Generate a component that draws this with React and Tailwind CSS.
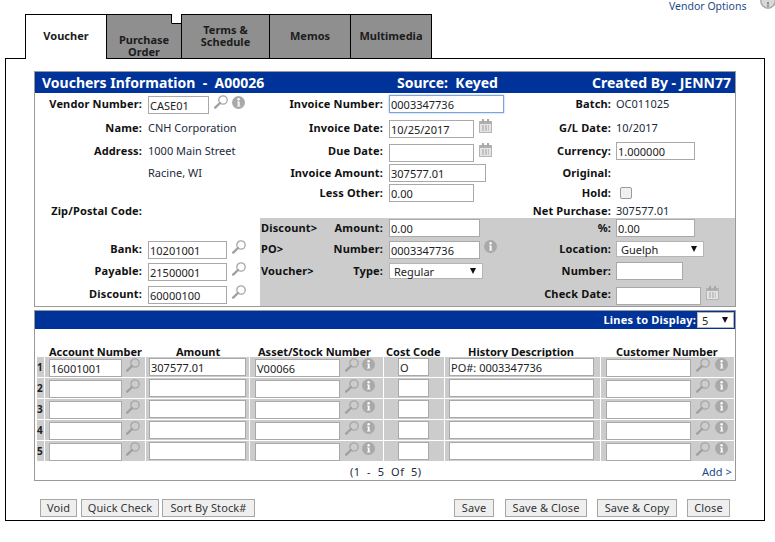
import { Fragment } from 'react'

function SearchIcon({ className = '' }) {
  return (
    <svg viewBox="0 0 14 14" className={`absolute h-[14px] w-[14px] ${className}`}>
      <circle cx="9" cy="5" r="4.2" fill="none" stroke="#a6a6a6" strokeWidth="1.3" />
      <path d="M6 8 L1.2 12.6" stroke="#a0a0a0" strokeWidth="2.4" strokeLinecap="round" />
    </svg>
  )
}

function InfoIcon({ className = '' }) {
  return (
    <svg viewBox="0 0 13 13" className={`absolute h-[13px] w-[13px] ${className}`}>
      <circle cx="6.5" cy="6.5" r="6.5" fill="#a9a9a9" />
      <circle cx="6.6" cy="3.3" r="1.2" fill="#fff" />
      <path d="M5 5.4 H7.6 V9.8 H8.4 V10.6 H5 V9.8 H5.8 V6.2 H5 Z" fill="#fff" />
    </svg>
  )
}

function CalendarIcon({ className = '' }) {
  return (
    <svg viewBox="0 0 13 14" className={`absolute h-[14px] w-[13px] ${className}`}>
      <rect x="0.5" y="2.5" width="12" height="11" fill="#e4e4e4" stroke="#b5b5b5" />
      <rect x="1" y="2" width="11" height="3" fill="#b0b0b0" />
      <rect x="3" y="0" width="2" height="4" fill="#a8a8a8" />
      <rect x="8" y="0" width="2" height="4" fill="#a8a8a8" />
      <path d="M3 7h7M3 9h7M3 11h7" stroke="#a0a0a0" strokeWidth="1" strokeDasharray="2 1" />
    </svg>
  )
}

function Label({ className = '', children }) {
  return (
    <span className={`absolute h-[14px] whitespace-nowrap text-right text-[11px] font-bold leading-[14px] tracking-[0.15px] text-[#111] ${className}`}>
      {children}
    </span>
  )
}

function Value({ className = '', children }) {
  return (
    <span className={`absolute h-[14px] whitespace-nowrap text-[11px] leading-[14px] text-[#222a3a] ${className}`}>
      {children}
    </span>
  )
}

function Field({ className = '', value = '' }) {
  return (
    <input
      readOnly
      value={value}
      className={`absolute h-[18px] border border-[#a9a9a9] bg-white pl-[1px] text-[11px] text-[#222] outline-none ${className}`}
    />
  )
}

function Select({ className = '', value, arrow = '' }) {
  return (
    <div className={`absolute h-[16px] border border-[#b5b5b5] bg-white pl-[4px] text-[11px] leading-[15px] text-[#222] ${className}`}>
      {value}
      <svg viewBox="0 0 6 6" className={`absolute top-[4px] h-[6px] w-[6px] ${arrow}`}>
        <polygon points="0,0 6,0 3,6" fill="#111" />
      </svg>
    </div>
  )
}

function Btn({ className = '', children }) {
  return (
    <button
      type="button"
      className={`absolute top-[499px] h-[18px] border border-[#a6a6a6] bg-[#efefef] p-0 text-center text-[11px] leading-[16px] tracking-[0.1px] text-[#333] ${className}`}
    >
      {children}
    </button>
  )
}

const tabClass =
  'absolute top-[14px] flex h-[45px] items-center justify-center border border-black bg-[#8f8f8f] text-center text-[11px] font-bold leading-[12px] text-[#1c1c1c]'

const headers = [
  ['Account Number', 'left-[49px]'],
  ['Amount', 'left-[176px]'],
  ['Asset/Stock Number', 'left-[258px]'],
  ['Cost Code', 'left-[386px]'],
  ['History Description', 'left-[468px]'],
  ['Customer Number', 'left-[616px]'],
]

const lines = [
  { account: '16001001', amount: '307577.01', stock: 'V00066', cost: 'O', history: 'PO#: 0003347736', customer: '' },
  { account: '', amount: '', stock: '', cost: '', history: '', customer: '' },
  { account: '', amount: '', stock: '', cost: '', history: '', customer: '' },
  { account: '', amount: '', stock: '', cost: '', history: '', customer: '' },
  { account: '', amount: '', stock: '', cost: '', history: '', customer: '' },
]

function LineRow({ line, index }) {
  return (
    <Fragment>
      <div className="bg-[#cccccc] pt-[3px] text-[10px] font-bold leading-[14px] text-[#222]">{index + 1}</div>
      <div className="relative bg-[#cccccc]">
        <Field className="left-[4px] top-[2px] w-[73px]" value={line.account} />
        <SearchIcon className="left-[81px] top-[1px]" />
      </div>
      <div className="relative bg-[#cccccc]">
        <Field className="left-[3px] top-[1px] w-[97px]" value={line.amount} />
      </div>
      <div className="relative bg-[#cccccc]">
        <Field className="left-[5px] top-[2px] w-[85px]" value={line.stock} />
        <SearchIcon className="left-[95px] top-[1px]" />
        <InfoIcon className="left-[112px] top-[1px]" />
      </div>
      <div className="relative bg-[#cccccc]">
        <Field className="left-[14px] top-[1px] w-[31px]" value={line.cost} />
      </div>
      <div className="relative bg-[#cccccc]">
        <Field className="left-[4px] top-[1px] w-[145px]" value={line.history} />
      </div>
      <div className="relative bg-[#cccccc]">
        <Field className="left-[5px] top-[2px] w-[85px]" value={line.customer} />
        <SearchIcon className="left-[95px] top-[1px]" />
        <InfoIcon className="left-[114px] top-[1px]" />
      </div>
    </Fragment>
  )
}

export default function App() {
  return (
    <div className="relative h-[542px] w-[775px] overflow-hidden bg-white font-['DejaVu_Sans',sans-serif]">
      <a className="absolute left-[669px] top-[0px] text-[10.5px] leading-[13px] text-[#1f4a8a]">Vendor Options</a>
      <svg viewBox="0 0 16 16" className="absolute left-[760px] top-[-7px] h-[16px] w-[16px]">
        <circle cx="8" cy="8" r="7.2" fill="#d8d8d8" stroke="#a9a9a9" strokeWidth="1.4" />
        <rect x="7" y="9" width="2" height="2.4" fill="#8a8a8a" />
        <circle cx="8" cy="13" r="1.1" fill="#8a8a8a" />
      </svg>

      {/* outer frame */}
      <div className="absolute left-[5px] top-[58px] h-[463px] w-[760px] border border-black" />

      {/* tabs */}
      <div className="absolute left-[25px] top-[14px] z-10 flex h-[45px] w-[82px] items-center justify-center border border-b-0 border-black bg-white pb-[1px] text-[11px] font-bold text-[#1c1c1c]">
        Voucher
      </div>
      <div className={`${tabClass} left-[106px] w-[76px] items-end`}>
        Purchase
        <br />
        Order
      </div>
      <svg viewBox="0 0 11 11" className="absolute left-[171px] top-[14px] h-[11px] w-[11px]">
        <polygon points="0,0 11,0 11,11" fill="#ffffff" />
        <polygon points="0,0 0,10 11,10" fill="#ffffff" />
        <path d="M0.5 0 V9.5 H11" fill="none" stroke="#000" />
      </svg>
      <div className={`${tabClass} left-[181px] w-[89px] pb-[2px]`}>
        Terms &amp;
        <br />
        Schedule
      </div>
      <div className={`${tabClass} left-[269px] w-[82px] pb-[2px]`}>Memos</div>
      <div className={`${tabClass} left-[350px] w-[82px] pb-[2px]`}>Multimedia</div>

      {/* voucher panel */}
      <div className="absolute left-[34px] top-[71px] h-[236px] w-[702px] border border-[#999]">
        <div className="absolute left-0 right-0 top-0 h-[21px] bg-[#003399]" />
        <div className="absolute bottom-0 left-[225px] right-0 h-[88px] bg-[#cccccc]" />
      </div>
      <span className="absolute left-[42px] top-[74px] whitespace-pre text-[14px] font-bold leading-[17px] text-white">Vouchers Information  -  A00026</span>
      <span className="absolute left-[397px] top-[74px] whitespace-pre text-[14px] font-bold leading-[17px] text-white">Source:  Keyed</span>
      <span className="absolute left-[592px] top-[74px] whitespace-pre text-[14px] font-bold leading-[17px] text-white">Created By - JENN77</span>

      {/* left column */}
      <Label className="right-[633px] top-[97px]">Vendor Number:</Label>
      <Field className="left-[148px] top-[96px] w-[61px]" value="CASE01" />
      <SearchIcon className="left-[214px] top-[95px]" />
      <InfoIcon className="left-[232px] top-[96px]" />
      <Label className="right-[633px] top-[121px]">Name:</Label>
      <Value className="left-[148px] top-[121px]">CNH Corporation</Value>
      <Label className="right-[633px] top-[144px]">Address:</Label>
      <Value className="left-[148px] top-[144px]">1000 Main Street</Value>
      <Value className="left-[148px] top-[166px]">Racine, WI</Value>
      <Label className="right-[633px] top-[204px]">Zip/Postal Code:</Label>
      <Label className="right-[633px] top-[242px]">Bank:</Label>
      <Field className="left-[148px] top-[241px] w-[79px]" value="10201001" />
      <SearchIcon className="left-[232px] top-[240px]" />
      <Label className="right-[633px] top-[264px]">Payable:</Label>
      <Field className="left-[148px] top-[263px] w-[79px]" value="21500001" />
      <SearchIcon className="left-[232px] top-[262px]" />
      <Label className="right-[633px] top-[287px]">Discount:</Label>
      <Field className="left-[148px] top-[286px] w-[79px]" value="60000100" />
      <SearchIcon className="left-[232px] top-[285px]" />

      {/* middle column */}
      <Label className="right-[392px] top-[97px]">Invoice Number:</Label>
      <input
        readOnly
        value="0003347736"
        className="absolute left-[389px] top-[95px] h-[18px] w-[115px] border border-[#7ea3d8] bg-white pl-[1px] text-[11px] text-[#222] shadow-[0_0_2px_#9dbbe6] outline-none"
      />
      <Label className="right-[392px] top-[121px]">Invoice Date:</Label>
      <Field className="left-[389px] top-[120px] w-[85px]" value="10/25/2017" />
      <CalendarIcon className="left-[479px] top-[119px]" />
      <Label className="right-[392px] top-[144px]">Due Date:</Label>
      <Field className="left-[389px] top-[144px] w-[85px]" />
      <CalendarIcon className="left-[479px] top-[143px]" />
      <Label className="right-[392px] top-[166px]">Invoice Amount:</Label>
      <Field className="left-[389px] top-[164px] w-[97px]" value="307577.01" />
      <Label className="right-[392px] top-[186px]">Less Other:</Label>
      <Field className="left-[389px] top-[184px] w-[85px]" value="0.00" />
      <Label className="left-[261px] top-[221px]">Discount&gt;</Label>
      <Label className="right-[392px] top-[221px]">Amount:</Label>
      <Field className="left-[389px] top-[219px] w-[91px]" value="0.00" />
      <Label className="left-[261px] top-[242px]">PO&gt;</Label>
      <Label className="right-[392px] top-[242px]">Number:</Label>
      <Field className="left-[389px] top-[241px] w-[91px]" value="0003347736" />
      <InfoIcon className="left-[484px] top-[240px]" />
      <Label className="left-[261px] top-[264px]">Voucher&gt;</Label>
      <Label className="right-[392px] top-[264px]">Type:</Label>
      <Select className="left-[389px] top-[263px] w-[94px]" value="Regular" arrow="left-[80px]" />

      {/* right column */}
      <Label className="right-[164px] top-[97px]">Batch:</Label>
      <Value className="left-[616px] top-[97px]">OC011025</Value>
      <Label className="right-[164px] top-[121px]">G/L Date:</Label>
      <Value className="left-[616px] top-[121px]">10/2017</Value>
      <Label className="right-[164px] top-[144px]">Currency:</Label>
      <Field className="left-[616px] top-[142px] w-[79px]" value="1.000000" />
      <Label className="right-[164px] top-[166px]">Original:</Label>
      <Label className="right-[164px] top-[186px]">Hold:</Label>
      <div className="absolute left-[620px] top-[187px] h-[12px] w-[12px] rounded-[2px] border border-[#9a9a9a] bg-[#f0f0f0]" />
      <Label className="right-[164px] top-[204px]">Net Purchase:</Label>
      <Value className="left-[616px] top-[204px]">307577.01</Value>
      <Label className="right-[164px] top-[221px]">%:</Label>
      <Field className="left-[616px] top-[219px] w-[79px]" value="0.00" />
      <Label className="right-[164px] top-[242px]">Location:</Label>
      <Select className="left-[616px] top-[241px] w-[88px]" value="Guelph" arrow="left-[74px]" />
      <Label className="right-[164px] top-[264px]">Number:</Label>
      <Field className="left-[616px] top-[262px] w-[67px]" />
      <Label className="right-[164px] top-[287px]">Check Date:</Label>
      <Field className="left-[616px] top-[287px] w-[85px]" />
      <CalendarIcon className="left-[706px] top-[286px]" />

      {/* lines panel */}
      <div className="absolute left-[34px] top-[310px] h-[171px] w-[702px] border border-[#999]">
        <div className="absolute left-0 right-0 top-0 h-[18px] bg-[#003399]" />
      </div>
      <span className="absolute right-[79px] top-[313px] text-[11px] font-bold leading-[14px] tracking-[0.2px] text-white">Lines to Display:</span>
      <Select className="left-[697px] top-[312px] w-[37px]" value="5" arrow="left-[24px]" />

      {headers.map(([text, left]) => (
        <Label key={text} className={`top-[345px] ${left} tracking-normal`}>
          {text}
        </Label>
      ))}

      <div className="absolute left-[37px] top-[357px] grid w-[696px] grid-cols-[7px_100px_103px_133px_60px_155px_133px] auto-rows-[20px] gap-x-px gap-y-px">
        {lines.map((line, index) => (
          <LineRow key={index} line={line} index={index} />
        ))}
      </div>

      <Value className="left-[350px] top-[465px] whitespace-pre tracking-[0.45px]">(1  -  5  Of  5)</Value>
      <a className="absolute left-[702px] top-[465px] text-[11px] leading-[14px] text-[#1f4a8a]">Add &gt;</a>

      {/* buttons */}
      <Btn className="left-[40px] w-[37px]">Void</Btn>
      <Btn className="left-[81px] w-[78px]">Quick Check</Btn>
      <Btn className="left-[162px] w-[93px]">Sort By Stock#</Btn>
      <Btn className="left-[454px] w-[40px]">Save</Btn>
      <Btn className="left-[505px] w-[82px]">Save &amp; Close</Btn>
      <Btn className="left-[597px] w-[80px]">Save &amp; Copy</Btn>
      <Btn className="left-[687px] w-[43px]">Close</Btn>
    </div>
  )
}
